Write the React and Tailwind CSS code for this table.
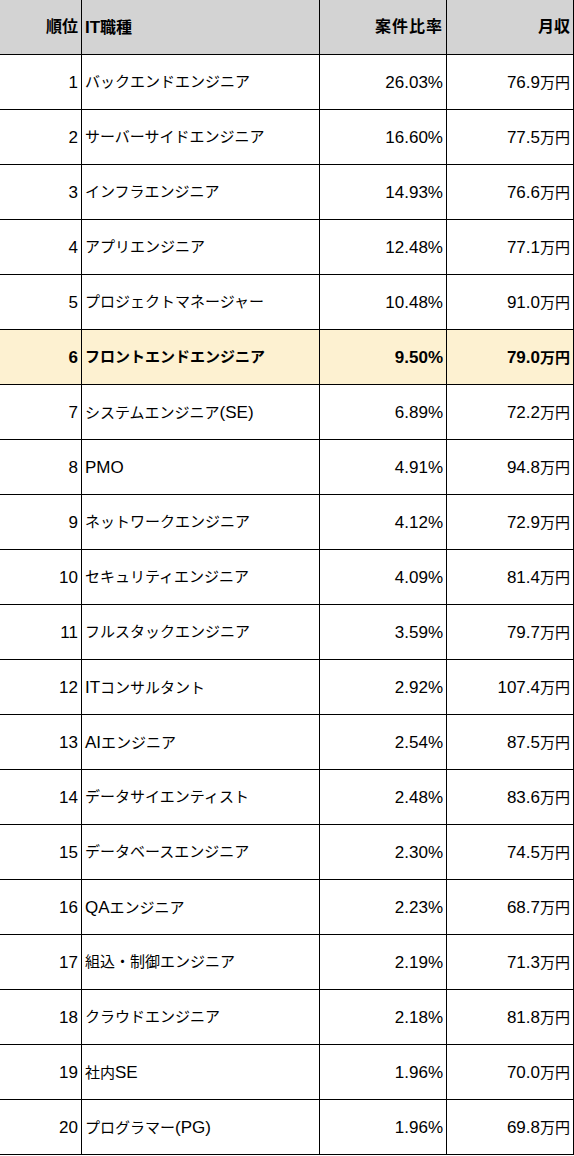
const ROWS = [
  ["バックエンドエンジニア", "26.03%", "76.9万円"],
  ["サーバーサイドエンジニア", "16.60%", "77.5万円"],
  ["インフラエンジニア", "14.93%", "76.6万円"],
  ["アプリエンジニア", "12.48%", "77.1万円"],
  ["プロジェクトマネージャー", "10.48%", "91.0万円"],
  ["フロントエンドエンジニア", "9.50%", "79.0万円"],
  ["システムエンジニア(SE)", "6.89%", "72.2万円"],
  ["PMO", "4.91%", "94.8万円"],
  ["ネットワークエンジニア", "4.12%", "72.9万円"],
  ["セキュリティエンジニア", "4.09%", "81.4万円"],
  ["フルスタックエンジニア", "3.59%", "79.7万円"],
  ["ITコンサルタント", "2.92%", "107.4万円"],
  ["AIエンジニア", "2.54%", "87.5万円"],
  ["データサイエンティスト", "2.48%", "83.6万円"],
  ["データベースエンジニア", "2.30%", "74.5万円"],
  ["QAエンジニア", "2.23%", "68.7万円"],
  ["組込・制御エンジニア", "2.19%", "71.3万円"],
  ["クラウドエンジニア", "2.18%", "81.8万円"],
  ["社内SE", "1.96%", "70.0万円"],
  ["プログラマー(PG)", "1.96%", "69.8万円"],
];

const HIGHLIGHT = 6;

// latin in Liberation Sans at 17px, kana/kanji a bit smaller so the widths match the sheet
function Mixed({ text, jp = "text-[15px]" }) {
  return text
    .split(/([\x00-\x7F]+)/)
    .filter(Boolean)
    .map((s, i) =>
      /^[\x00-\x7F]+$/.test(s) ? (
        <span key={i} className="text-[17px]">{s}</span>
      ) : (
        <span key={i} className={jp}>{s}</span>
      )
    );
}

function Cell({ children, right, bg = "" }) {
  return (
    <div className={`flex h-[55px] items-center border-r border-b border-black px-[3px] ${right ? "justify-end" : "justify-start"} ${bg}`}>
      <span className="whitespace-nowrap leading-none">{children}</span>
    </div>
  );
}

export default function App() {
  return (
    <div
      className="w-[574px] bg-white text-black"
      style={{ fontFamily: '"Liberation Sans", "Noto Sans CJK JP", sans-serif' }}
    >
      <div className="grid grid-cols-[82px_238px_127px_127px]">
        <Cell right bg="bg-[#d3d3d3] font-bold"><Mixed text="順位" jp="text-[16px]" /></Cell>
        <Cell bg="bg-[#d3d3d3] font-bold"><Mixed text="IT職種" jp="text-[16px]" /></Cell>
        <Cell right bg="bg-[#d3d3d3] font-bold"><Mixed text="案件比率" jp="text-[16px] tracking-[1px]" /></Cell>
        <Cell right bg="bg-[#d3d3d3] font-bold"><Mixed text="月収" jp="text-[16px]" /></Cell>

        {ROWS.map(([job, ratio, pay], i) => {
          const rank = i + 1;
          const bg = rank === HIGHLIGHT ? "bg-[#fdf1d1] font-bold" : "";
          return [
            <Cell key={`r${rank}`} right bg={bg}><Mixed text={String(rank)} /></Cell>,
            <Cell key={`j${rank}`} bg={bg}><Mixed text={job} /></Cell>,
            <Cell key={`p${rank}`} right bg={bg}><Mixed text={ratio} /></Cell>,
            <Cell key={`m${rank}`} right bg={bg}><Mixed text={pay} /></Cell>,
          ];
        })}
      </div>
    </div>
  );
}
